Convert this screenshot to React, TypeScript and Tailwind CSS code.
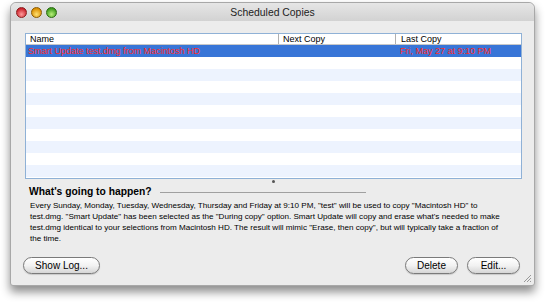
import React from 'react';

const rows = Array.from({ length: 10 }, (_, i) => i);

const Light = ({ from, to, ring }: { from: string; to: string; ring: string }) => (
  <div
    className="w-[11px] h-[11px] rounded-full border"
    style={{ background: `radial-gradient(circle at 50% 70%, ${to}, ${from} 75%)`, borderColor: ring }}
  />
);

const PillButton = ({ label, className }: { label: string; className: string }) => (
  <button
    className={`h-[17px] rounded-full border border-[#7a7a7a] bg-gradient-to-b from-white via-[#f2f2f2] to-[#d6d6d6] text-[10px] leading-none text-black shadow-[0_1px_1px_rgba(0,0,0,0.15)] ${className}`}
  >
    {label}
  </button>
);

const lines = [
  'Every Sunday, Monday, Tuesday, Wednesday, Thursday and Friday at 9:10 PM, "test" will be used to copy "Macintosh HD" to',
  'test.dmg. "Smart Update" has been selected as the "During copy" option. Smart Update will copy and erase what\'s needed to make',
  'test.dmg identical to your selections from Macintosh HD. The result will mimic "Erase, then copy", but will typically take a fraction of',
  'the time.',
];

export default function App() {
  return (
    <div
      className="w-[546px] h-[304px] bg-white pt-[2px] pl-[10px] overflow-hidden"
      style={{ fontFamily: '"Liberation Sans", Arial, sans-serif' }}
    >
      <div className="w-[525px] h-[284px] rounded-t-[6px] rounded-b-[3px] bg-[#ececec] border border-[#a8a8a8] shadow-[0_6px_10px_rgba(0,0,0,0.45)] flex flex-col relative">
        {/* title bar */}
        <div className="h-[18px] rounded-t-[6px] bg-gradient-to-b from-[#e6e6e6] to-[#d2d2d2] flex items-center relative">
          <div className="flex gap-[4px] pl-[5px] pt-[1px]">
            <Light from="#c8202a" to="#ff9a9a" ring="#8a1c1c" />
            <Light from="#d98d00" to="#ffe070" ring="#8a5a00" />
            <Light from="#3d9a1c" to="#b8f07a" ring="#2a6a10" />
          </div>
          <div className="absolute inset-0 flex items-center justify-center text-[10.4px] text-[#222] pt-[2px]">
            Scheduled Copies
          </div>
        </div>

        {/* table */}
        <div className="mt-[12px] ml-[14px] w-[497px] h-[146px] border border-[#8fb1d6] bg-white overflow-hidden">
          <div className="flex h-[11px] border-b border-[#c8c8c8] text-[9px] leading-[11px] text-black">
            <div className="w-[253px] pl-[4px] border-r border-[#b0b0b0]">Name</div>
            <div className="w-[117px] pl-[4px] border-r border-[#b0b0b0]">Next Copy</div>
            <div className="flex-1 pl-[5px]">Last Copy</div>
          </div>
          <div className="flex h-[12px] bg-[#3875d7] text-[9px] leading-[12px] text-[#ff2a2a]">
            <div className="w-[253px] pl-[2px] whitespace-nowrap">Smart Update test.dmg from Macintosh HD</div>
            <div className="w-[117px]" />
            <div className="flex-1 pl-[4px] whitespace-nowrap">Fri, May 27 at 9:10 PM</div>
          </div>
          {rows.map((i) => (
            <div key={i} className={`h-[12px] ${i % 2 === 0 ? 'bg-white' : 'bg-[#edf3fe]'}`} />
          ))}
        </div>

        {/* splitter dot */}
        <div className="flex justify-center h-[6px] pt-[1px] pl-[2px]">
          <div className="w-[3px] h-[3px] rounded-full bg-[#555]" />
        </div>

        {/* heading */}
        <div className="flex items-center h-[14px] ml-[18px] gap-[8px]">
          <div className="text-[10.3px] font-bold text-black leading-[14px]">What's going to happen?</div>
          <div className="w-[206px] h-px bg-[#a0a0a0]" />
        </div>

        <div className="mt-[1px] ml-[19px] text-[8.1px] leading-[11px] text-black">
          {lines.map((l) => (
            <div key={l} className="whitespace-nowrap">{l}</div>
          ))}
        </div>

        {/* buttons */}
        <div className="mt-auto mb-[11px] flex items-center pl-[12px] pr-[14px]">
          <PillButton label="Show Log..." className="w-[77px]" />
          <div className="flex-1" />
          <PillButton label="Delete" className="w-[53px]" />
          <PillButton label="Edit..." className="w-[53px] ml-[9px]" />
        </div>

        {/* resize grip */}
        <svg className="absolute right-[2px] bottom-[2px]" width="10" height="10" viewBox="0 0 10 10">
          <path d="M9 2 L2 9 M9 5 L5 9 M9 8 L8 9" stroke="#999" strokeWidth="1" />
        </svg>
      </div>
    </div>
  );
}
